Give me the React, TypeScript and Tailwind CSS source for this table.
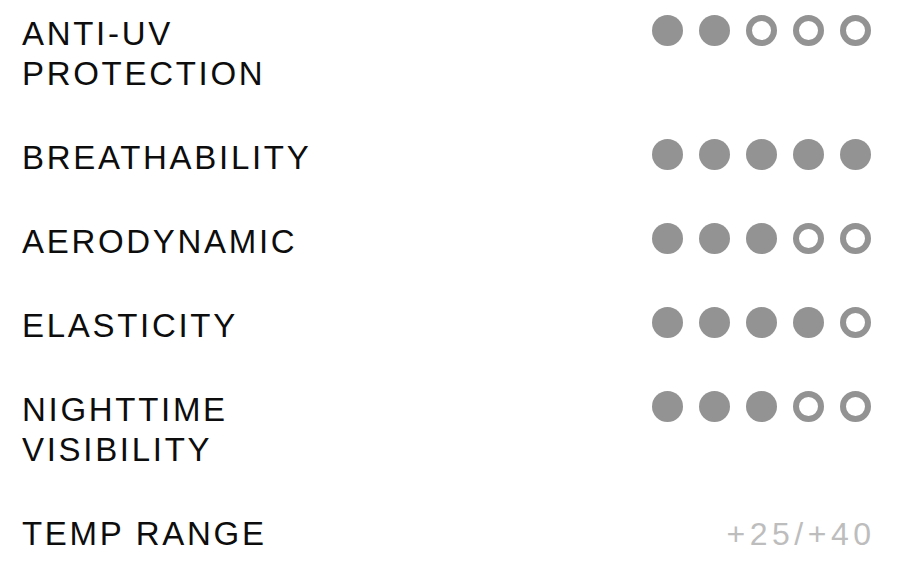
const features = [
  { label: ['ANTI-UV', 'PROTECTION'], score: 2 },
  { label: ['BREATHABILITY'], score: 5 },
  { label: ['AERODYNAMIC'], score: 3 },
  { label: ['ELASTICITY'], score: 4 },
  { label: ['NIGHTTIME', 'VISIBILITY'], score: 3 },
]

function Rating({ score }: { score: number }) {
  return (
    <div className="mt-px flex gap-4">
      {[0, 1, 2, 3, 4].map((i) =>
        i < score ? (
          <span key={i} className="h-[31px] w-[31px] rounded-full bg-[#939393]" />
        ) : (
          <span key={i} className="h-[31px] w-[31px] rounded-full border-[6px] border-[#939393]" />
        )
      )}
    </div>
  )
}

export default function App() {
  return (
    <div
      className="flex h-[566px] w-[900px] flex-col gap-[44px] bg-white pl-[22px] pr-[29px] pt-[14px] text-[#0d0d0d]"
      style={{ fontFamily: '"Liberation Sans", Arial, sans-serif' }}
    >
      {features.map((f) => (
        <div key={f.label.join(' ')} className="flex items-start justify-between">
          <div className="text-[33px] leading-[40px] tracking-[2.7px]">
            {f.label.map((line) => (
              <div key={line}>{line}</div>
            ))}
          </div>
          <Rating score={f.score} />
        </div>
      ))}
      <div className="flex items-start justify-between">
        <div className="text-[33px] leading-[40px] tracking-[2.7px]">TEMP RANGE</div>
        <div className="-mr-[4.5px] text-[32px] leading-[40px] tracking-[4.5px] text-[#bdbdbd]">+25/+40</div>
      </div>
    </div>
  )
}
